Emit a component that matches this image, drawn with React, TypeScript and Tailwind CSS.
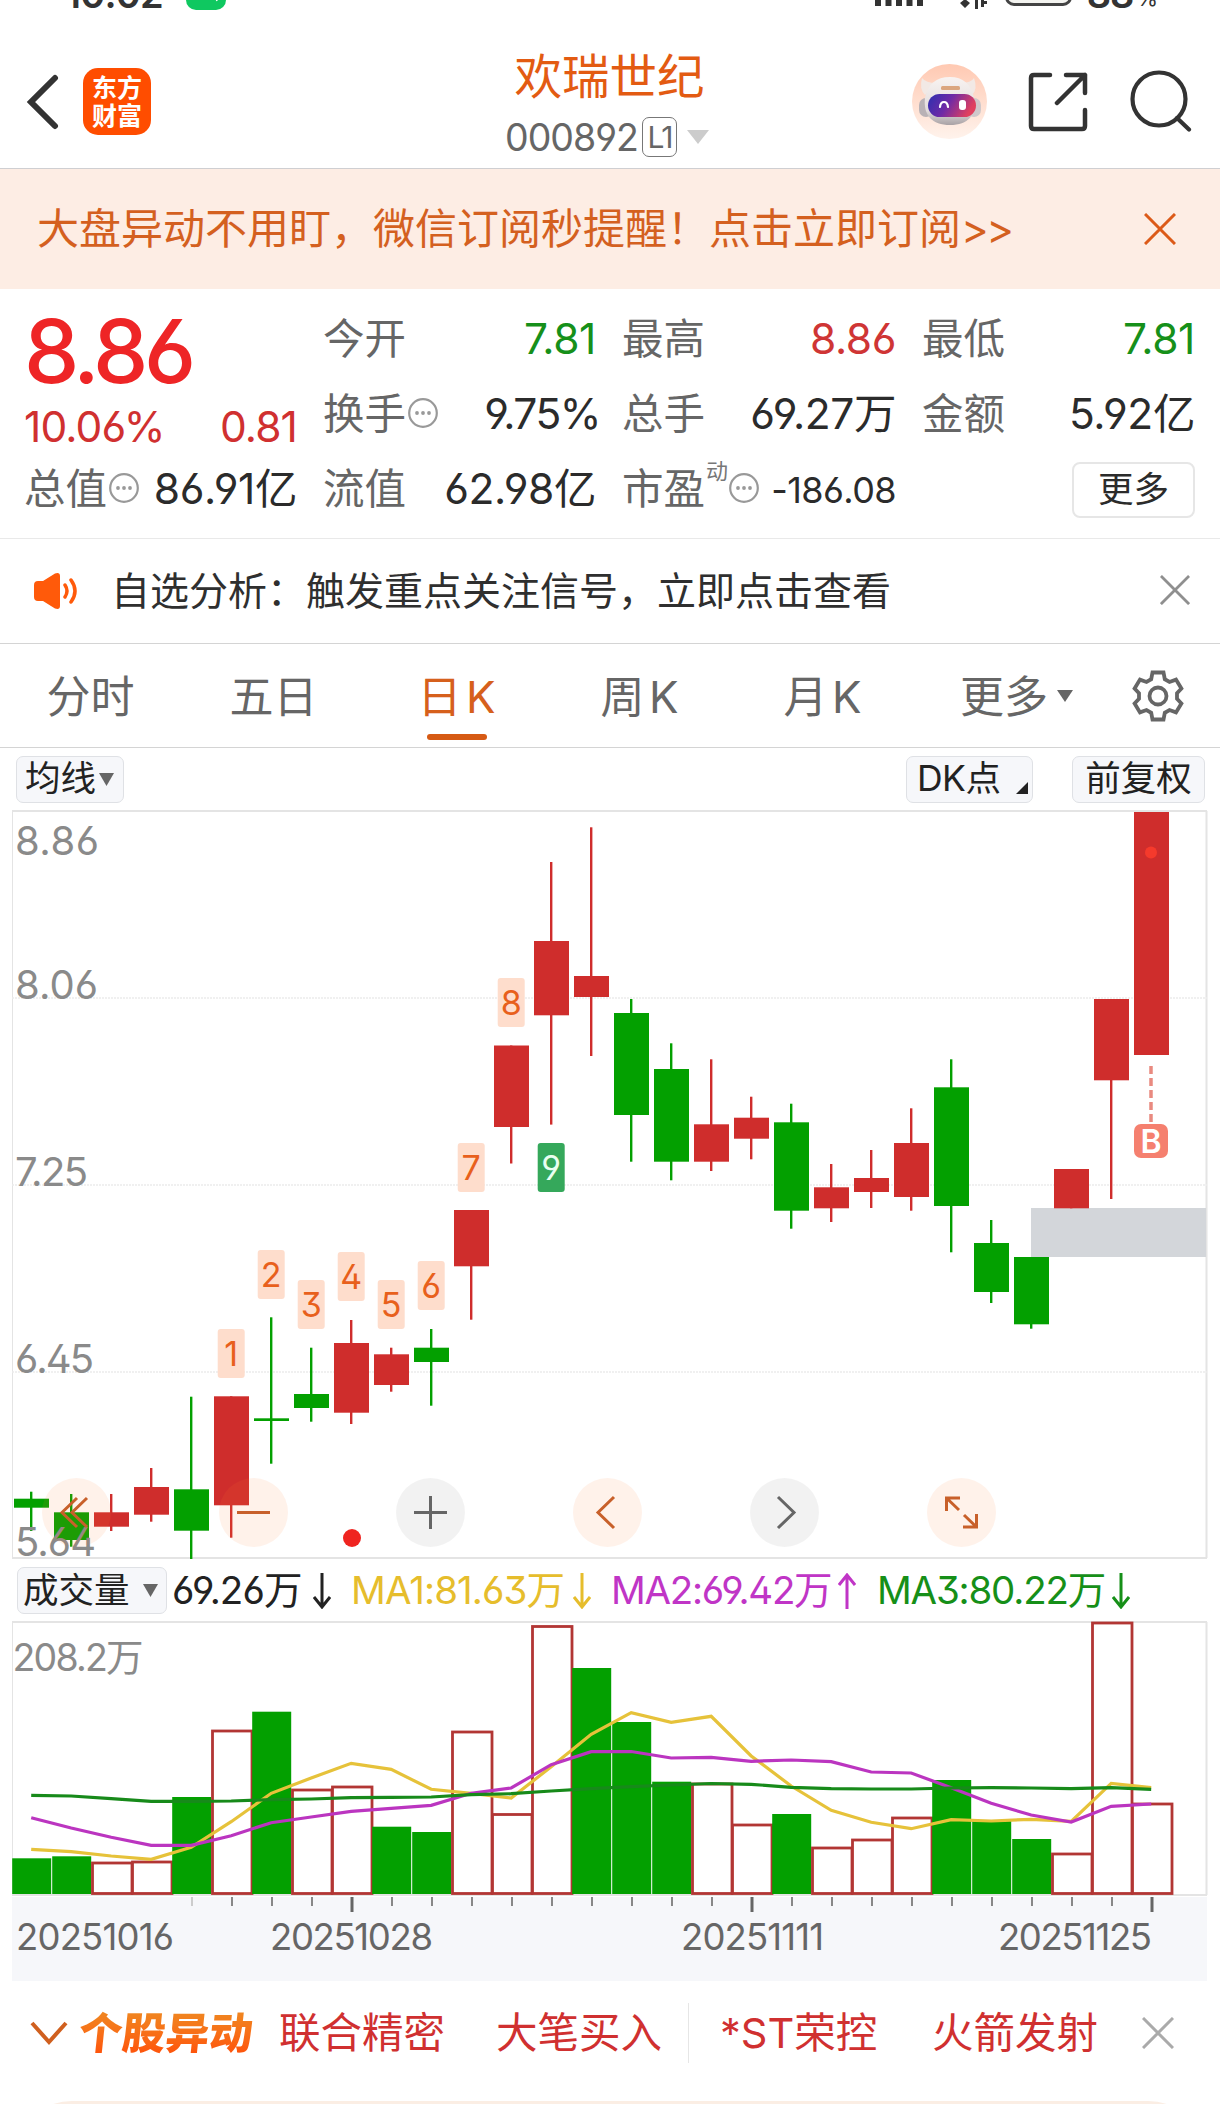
import { useId } from "react";
import type { ReactNode } from "react";

type Candle = { up: boolean; top: number; bottom: number; high: number; low: number; vol: number };

const UP = "#cf2d2c";
const DOWN = "#03a000";

const c = (up: boolean, top: number, bottom: number, high: number, low: number, vol: number): Candle => ({
  up, top, bottom, high, low, vol,
});

// candle geometry and top of the volume bar, one row per trading day
const candles: Candle[] = [
  c(false, 1498.7, 1507.7, 1491.7, 1531, 1858.3),
  c(false, 1512.3, 1540, 1494, 1546.7, 1856.3),
  c(true, 1512.3, 1526.7, 1494, 1531, 1863),
  c(true, 1487, 1514.7, 1468, 1521.7, 1862),
  c(false, 1489.3, 1530.7, 1396.7, 1559, 1797),
  c(true, 1396.3, 1505.3, 1396.3, 1537.7, 1731),
  c(false, 1418.3, 1421, 1317.3, 1463.7, 1711.7),
  c(false, 1394, 1408, 1347.7, 1421.7, 1790),
  c(true, 1343, 1412.7, 1320, 1424, 1787),
  c(true, 1354.3, 1385, 1347.7, 1391.7, 1826.7),
  c(false, 1347.7, 1362, 1329, 1405.7, 1832),
  c(true, 1210, 1266.3, 1210, 1319.7, 1732),
  c(true, 1045.5, 1127, 1045.5, 1163.5, 1814.5),
  c(true, 941, 1015.3, 862, 1124.6, 1626.5),
  c(true, 976, 997, 827.3, 1056, 1668),
  c(false, 1013, 1115, 999, 1161.7, 1722),
  c(false, 1069, 1161.7, 1043.3, 1180.3, 1781.7),
  c(true, 1124.3, 1161.7, 1059.3, 1171, 1784),
  c(true, 1117.7, 1138.7, 1096.7, 1159.3, 1825),
  c(false, 1122.3, 1210.7, 1103.7, 1228.7, 1814),
  c(true, 1187.3, 1208.3, 1164, 1222, 1848),
  c(true, 1178, 1192, 1150, 1208, 1840),
  c(true, 1143, 1197, 1108.3, 1210.7, 1818),
  c(false, 1087.3, 1206, 1059.3, 1252.3, 1780),
  c(false, 1243, 1292, 1220, 1303, 1821),
  c(false, 1257, 1324.3, 1257, 1328.7, 1839),
  c(true, 1169, 1208.3, 1169, 1208.3, 1854),
  c(true, 999, 1080.3, 999, 1199, 1623),
  c(true, 812, 1055, 812, 1055, 1804),
];

// three days have a volume bar in the other style than their candle
const hollow = (i: number) => (i === 7 ? true : i === 9 || i === 14 ? false : candles[i].up);

const ma1 = [1849.3, 1851.7, 1856, 1859.3, 1847.3, 1821.7, 1793.3, 1778, 1763.3, 1769.3, 1789.3, 1793.3, 1798, 1766.7, 1734.3, 1712.7, 1722.3, 1716.3, 1756, 1786, 1810.3, 1822.3, 1828.7, 1819.7, 1821, 1819.3, 1821.3, 1783.3, 1787.7];
const ma2 = [1817.7, 1828, 1837.3, 1845.3, 1845.3, 1835.7, 1822.7, 1817, 1811.3, 1808.3, 1805.3, 1793.3, 1788, 1764.7, 1751.7, 1751.5, 1758, 1757.3, 1761.3, 1760, 1761.7, 1772, 1773, 1787.7, 1803.3, 1815, 1822, 1806.3, 1804];
const ma3 = [1795.3, 1796, 1798.7, 1801.3, 1801.3, 1801, 1799.7, 1799, 1797.7, 1797.3, 1797, 1794.7, 1793.7, 1791, 1788.7, 1786.7, 1785, 1783.5, 1784.3, 1787.3, 1788.7, 1789, 1789, 1788, 1787.7, 1788, 1788.7, 1787.7, 1789.3];

const marks = [
  { n: 1, i: 5, y: 1329 },
  { n: 2, i: 6, y: 1250 },
  { n: 3, i: 7, y: 1280 },
  { n: 4, i: 8, y: 1252 },
  { n: 5, i: 9, y: 1280 },
  { n: 6, i: 10, y: 1261 },
  { n: 7, i: 11, y: 1143 },
  { n: 8, i: 12, y: 978 },
  { n: 9, i: 13, y: 1143 },
];

const prices = [
  { t: "8.86", y: 854.5, w: 84 },
  { t: "8.06", y: 998.5, w: 83 },
  { t: "7.25", y: 1185.5, w: 73 },
  { t: "6.45", y: 1372.5, w: 79 },
  { t: "5.64", y: 1555.5, w: 81 },
];

const cx = (i: number) => 31.2 + i * 40;
const line = (ys: number[]) => ys.map((y, i) => `${cx(i)},${y}`).join(" ");

function Cross({ size, className, width = 3 }: { size: number; className: string; width?: number }) {
  return (
    <svg width={size} height={size} viewBox="0 0 32 32" className={className} fill="none" stroke="currentColor" strokeWidth={width}>
      <path d="M1 1L31 31M31 1L1 31" />
    </svg>
  );
}

function Triangle({ w, h, className }: { w: number; h: number; className: string }) {
  return (
    <svg width={w} height={h} viewBox="0 0 10 10" preserveAspectRatio="none" className={className} fill="currentColor">
      <path d="M0 0H10L5 10Z" />
    </svg>
  );
}

function MoreDots() {
  return (
    <svg width="30" height="30" viewBox="0 0 30 30" className="mb-[3px] ml-[2px] shrink-0 text-[#999]" fill="currentColor">
      <circle cx="15" cy="15" r="13.8" fill="none" stroke="currentColor" strokeWidth="2.2" />
      <circle cx="9" cy="15" r="1.9" />
      <circle cx="15" cy="15" r="1.9" />
      <circle cx="21" cy="15" r="1.9" />
    </svg>
  );
}

function Robot() {
  const id = useId();
  return (
    <svg width="75" height="75" viewBox="0 0 75 75">
      <defs>
        <linearGradient id={`${id}bg`} x1="0" y1="0" x2="0" y2="1">
          <stop offset="0" stopColor="#ffc9b2" />
          <stop offset="1" stopColor="#fff3ec" />
        </linearGradient>
        <linearGradient id={`${id}head`} x1="0" y1="0" x2="0" y2="1">
          <stop offset="0" stopColor="#f8f3f1" />
          <stop offset="0.7" stopColor="#e2dcdc" />
          <stop offset="1" stopColor="#a9a2a5" />
        </linearGradient>
        <linearGradient id={`${id}face`} x1="0" y1="0" x2="1" y2="0.3">
          <stop offset="0" stopColor="#2b2fb0" />
          <stop offset="0.5" stopColor="#6f2aa6" />
          <stop offset="1" stopColor="#e0405f" />
        </linearGradient>
      </defs>
      <circle cx="37.5" cy="37.5" r="37.5" fill={`url(#${id}bg)`} />
      <path d="M10 14Q7 25 13 31L24 19Q14 19 10 14ZM62 14Q66 25 60 31L49 19Q59 19 62 14Z" fill="#f2e9e5" />
      <rect x="7" y="34" width="14" height="19" rx="7" fill="#b9b2b6" />
      <rect x="55" y="34" width="14" height="19" rx="7" fill="#cfc8ca" />
      <path d="M38 13C51 13 59 20 62 34C65 51 56 61 38 61C20 61 11 51 13 34C16 20 24 13 38 13Z" fill={`url(#${id}head)`} />
      <rect x="29" y="22" width="19" height="4" rx="1.5" fill="#dba67f" />
      <rect x="16" y="30" width="48" height="23" rx="11.5" fill={`url(#${id}face)`} />
      <path d="M28 43Q28.500 38 32 38Q35.500 38 36 43" fill="none" stroke="#fff" strokeWidth="2.2" strokeLinecap="round" />
      <rect x="47" y="36" width="7" height="10" rx="3" fill="#fff" />
    </svg>
  );
}

function StatusBar() {
  return (
    <div className="flex h-[12px] items-end overflow-hidden pl-[65px] pr-[62px] text-[#333]">
      <span className="mb-[-1px] w-[121px] text-[38px] leading-[38px] font-semibold tracking-[-0.8px]">10:02</span>
      <svg width="40" height="40" viewBox="0 0 40 40" className="mb-[2px] shrink-0">
        <rect width="40" height="40" rx="10" fill="#0fc860" />
        <path d="M29 26l2 5" stroke="#fff" strokeWidth="1.5" />
      </svg>
      <svg width="48" height="30" viewBox="0 0 48 30" className="mb-[6px] ml-auto shrink-0" fill="currentColor">
        <path d="M0 18h6v12H0zM10.500 14h6v16h-6zM21 10h6v20h-6zM31.500 5h6v25h-6zM42 0h6v30h-6z" />
      </svg>
      <svg width="32" height="30" viewBox="0 0 32 30" className="mb-[3px] ml-[33px] shrink-0" fill="currentColor">
        <path d="M4 24l5-4 5 4-5 5zM2 20l3 3M16 20l-3 3M19 18h3v12h-3zM25 16h3v12h-3zM28 22h3v3h-3z" />
      </svg>
      <span className="mb-[6px] ml-[17px] h-[32px] w-[67px] shrink-0 rounded-[9px] border-[3px] border-[#444] bg-[#f4f4f0]" />
      <span className="mb-[-1px] ml-[15px] text-[38px] leading-[38px] font-semibold tracking-[-1px]">88</span>
      <span className="mb-[3px] ml-[3px] text-[22px] leading-[22px]">%</span>
    </div>
  );
}

function Header() {
  return (
    <header className="flex h-[157px] items-start border-b border-[#cfcfd2] pl-[26px] pr-[28px]">
      <svg width="33" height="56" viewBox="0 0 33 56" className="mt-[62px]" fill="none" stroke="#333" strokeWidth="6" strokeLinecap="round">
        <path d="M29 4L5 28L29 52" strokeLinejoin="miter" />
      </svg>
      <div className="mt-[56px] ml-[24px] flex h-[67px] w-[68px] flex-col items-center justify-center rounded-[15px] bg-[#ff4d00] text-[25px] leading-[28px] font-bold text-white">
        <span>东方</span>
        <span>财富</span>
      </div>
      <div className="ml-[350px] flex w-[217px] flex-col items-center">
        <h1 className="mt-[41px] text-[47.5px] leading-[48px] whitespace-nowrap text-[#e35b12]">欢瑞世纪</h1>
        <div className="mt-[15px] flex w-full items-center text-[#666]">
          <span className="mt-[2px] ml-[4px] w-[137px] text-[37.5px] leading-[40px] tracking-[-1px] whitespace-nowrap">000892</span>
          <span className="flex h-[40px] w-[35px] items-center justify-center rounded-[7px] border-[1.5px] border-[#777] text-[30px] leading-none tracking-[-2px]">L1</span>
          <Triangle w={22} h={14} className="ml-[10px] shrink-0 text-[#ccc]" />
        </div>
      </div>
      <div className="mt-[52px] ml-auto">
        <Robot />
      </div>
      <svg width="60" height="60" viewBox="0 0 60 60" className="mt-[60px] ml-[41px]" fill="none" stroke="#333" strokeWidth="4.500" strokeLinecap="round">
        <path d="M22 3H6Q3 3 3 6V54Q3 57 6 57H54Q57 57 57 54V38M38 3H57V21M57 3L29 31" strokeLinejoin="round" />
      </svg>
      <svg width="62" height="62" viewBox="0 0 62 62" className="mt-[58px] ml-[42px]" fill="none" stroke="#333" strokeWidth="4.200" strokeLinecap="round">
        <circle cx="29" cy="29" r="26.500" />
        <path d="M47 48L59 59.500" />
      </svg>
    </header>
  );
}

function Stat({ label, value, more, sup, tone = "text-[#2b2b2b]", size = "text-[42.5px] tracking-[-0.4px]" }: { label: string; value: string; more?: boolean; sup?: string; tone?: string; size?: string }) {
  return (
    <div className="-ml-[2px] flex h-[75px] items-center whitespace-nowrap">
      <span className="text-[41.5px] leading-none text-[#666]">{label}</span>
      {sup && <span className="mb-[38px] -mr-[1px] ml-[1px] text-[22px] leading-none text-[#777]">{sup}</span>}
      {more && <MoreDots />}
      <span className={`ml-auto leading-none ${size} ${tone}`}>{value}</span>
    </div>
  );
}

function Quote() {
  return (
    <section className="grid h-[250px] grid-cols-[271px_271px_272px_271px] grid-rows-[75px_75px_75px] gap-x-[28px] border-b border-[#e9e9e9] pt-[13px] pl-[26px]">
      <div className="row-span-2 flex flex-col text-[#ee2526]">
        <span className="-ml-[2px] mt-[4px] text-[88px] leading-[90px] font-medium tracking-[-4.500px]">8.86</span>
        <div className="mt-[9px] -ml-[2px] flex justify-between text-[42.500px] leading-[44px] tracking-[-0.900px] text-[#d03030]">
          <span>10.06%</span>
          <span>0.81</span>
        </div>
      </div>
      <Stat label="今开" value="7.81" tone="text-[#16901a]" />
      <Stat label="最高" value="8.86" tone="text-[#cf3535]" />
      <Stat label="最低" value="7.81" tone="text-[#16901a]" />
      <Stat label="换手" value="9.75%" more size="text-[42.500px] tracking-[-1.500px] -mr-[4px]" />
      <Stat label="总手" value="69.27万" />
      <Stat label="金额" value="5.92亿" />
      <Stat label="总值" value="86.91亿" more />
      <Stat label="流值" value="62.98亿" />
      <Stat label="市盈" sup="动" value="-186.08" more size="text-[36px] tracking-[-0.600px]" />
      <button className="my-auto ml-auto h-[56px] w-[123px] rounded-[8px] border-2 border-[#e6e6e6] text-[35.500px] leading-none text-[#2b2b2b]">更多</button>
    </section>
  );
}

function Notice() {
  return (
    <div className="flex h-[105px] items-center border-b border-[#d4d4d4] pr-[30px] pl-[34px]">
      <svg width="44" height="36" viewBox="0 0 44 36" fill="none" stroke="#ff5a0a" strokeWidth="3.500" strokeLinecap="round">
        <path d="M0 12Q0 8 4 8H9L21 0.500Q26-1 26 3V33Q26 37 21 35.500L9 28H4Q0 28 0 24Z" fill="#ff5a0a" stroke="none" />
        <path d="M31 12Q35 18 31 24M37 7Q45 18 37 29" />
      </svg>
      <span className="mb-[2px] ml-[33px] text-[39px] leading-none whitespace-nowrap text-[#2f2f2f]">自选分析：触发重点关注信号，立即点击查看</span>
      <Cross size={30} className="mb-[2px] ml-auto text-[#8f8f8f]" />
    </div>
  );
}

const tabs = ["分时", "五日", "日 K", "周 K", "月 K"];

function Tabs() {
  return (
    <nav className="flex h-[104px] items-center border-b border-[#d4d4d4] text-[44px] leading-none text-[#666]">
      {tabs.map((tab, i) => (
        <div key={tab} className={`relative flex h-full w-[183px] items-center justify-center whitespace-nowrap [word-spacing:-8px] ${i === 2 ? "text-[#d6601c]" : ""}`}>
          <span className="-ml-[2px] mt-[2px]">{tab}</span>
          {i === 2 && <span className="absolute bottom-[7px] left-[61px] h-[6px] w-[60px] rounded-full bg-[#d65a14]" />}
        </div>
      ))}
      <span className="ml-[45px] mt-[2px]">更多</span>
      <Triangle w={16} h={12} className="ml-[9px] text-[#666]" />
      <svg width="54" height="54" viewBox="0 0 54 54" className="ml-[58px]" fill="none" stroke="#666" strokeWidth="3.800">
        <path d="M21.500 3.500H32.500L33.800 10.200L38.500 13L45 10.600L50.400 19.600L46 24.200V29.800L50.400 34.400L45 43.400L38.500 41L33.800 43.800L32.500 50.500H21.500L20.200 43.800L15.500 41L9 43.400L3.600 34.400L8 29.800V24.200L3.600 19.600L9 10.600L15.500 13L20.200 10.200Z" />
        <circle cx="27" cy="27" r="8.500" />
      </svg>
    </nav>
  );
}

function Chip({ className, children }: { className: string; children: ReactNode }) {
  return (
    <button className={`flex h-[47px] items-center rounded-[7px] border-[1.500px] border-[#dfe1e5] bg-[#f6f7fa] leading-none whitespace-nowrap text-[#222] ${className}`}>
      {children}
    </button>
  );
}

function PriceChart() {
  return (
    <div className="relative mx-[12px] h-[750px]">
      <svg width="1196" height="750" viewBox="12 810 1196 750" className="block">
        <g stroke="#e4e4e4" fill="none">
          <path d="M12 811H1207M12 1558H1207" strokeWidth="2" />
          <path d="M12.500 811V1558" />
          <path d="M1206.500 811V1558" strokeWidth="2" />
          <path d="M12 998H1207M12 1185H1207M12 1372H1207" strokeDasharray="2 1" strokeWidth="1.500" stroke="#ececec" />
        </g>
        <rect x="1031" y="1208" width="175" height="49" fill="#d3d6da" />
        {candles.map((d, i) => (
          <g key={i} fill={d.up ? UP : DOWN}>
            <rect x={cx(i) - 1.2} y={d.high} width="2.4" height={d.low - d.high} />
            <rect x={cx(i) - 17.2} y={d.top} width="35" height={d.bottom - d.top} />
          </g>
        ))}
        {marks.map((m) => (
          <g key={m.n}>
            <rect x={cx(m.i) - 13.5} y={m.y} width="27" height="49" rx="3" fill={m.n === 9 ? "#35a85b" : "#feddcc"} />
            <text x={cx(m.i)} y={m.y + 37} textAnchor="middle" fontSize="34" fill={m.n === 9 ? "#e9fff0" : "#e8601c"}>{m.n}</text>
          </g>
        ))}
        <circle cx="1151" cy="852.5" r="6" fill="#f53a2c" />
        <path d="M1151 1066V1123" stroke="#e98a80" strokeWidth="3.500" strokeDasharray="8 4" />
        <rect x="1134" y="1124" width="34" height="34" rx="7" fill="#f5806f" />
        <text x="1151" y="1152.5" textAnchor="middle" fontSize="32" fontWeight="600" fill="#fff">B</text>
        <circle cx="352" cy="1538" r="9" fill="#ef2420" />
        <g fontSize="40" fill="#8a8a8a">
          {prices.map((p) => (
            <text key={p.t} x="15" y={p.y} textLength={p.w}>{p.t}</text>
          ))}
        </g>
      </svg>
      <div className="absolute top-[668px] left-[30px] flex gap-[108px]">
        <NavButton warm><path d="M35 20L20 34.500L35 49M45 20L30 34.500L45 49" /></NavButton>
        <NavButton warm><path d="M18 34.500H51" /></NavButton>
        <NavButton><path d="M18 34.500H51M34.500 18V51" /></NavButton>
        <NavButton warm><path d="M41 19L25 34.500L41 50" /></NavButton>
        <NavButton><path d="M28 19L44 34.500L28 50" /></NavButton>
        <NavButton warm><path d="M33 20H19.500V33M19.500 20L32 32M36 49H49.500V36M49.500 49L37 37" /></NavButton>
      </div>
    </div>
  );
}

function NavButton({ warm, children }: { warm?: boolean; children: ReactNode }) {
  return (
    <button className={`size-[69px] rounded-full ${warm ? "bg-[#ff7a30]/10 text-[#c8602a]" : "bg-black/5 text-[#666]"}`}>
      <svg width="69" height="69" viewBox="0 0 69 69" fill="none" stroke="currentColor" strokeWidth="3">
        {children}
      </svg>
    </button>
  );
}

function Arrow({ up, className }: { up?: boolean; className: string }) {
  return (
    <svg width="18" height="36" viewBox="0 0 18 36" className={`shrink-0 ${className}`} fill="none" stroke="currentColor" strokeWidth="3">
      <path d={up ? "M9 36V2M1 12L9 2L17 12" : "M9 0V34M1 24L9 34L17 24"} />
    </svg>
  );
}

function VolumeHeader() {
  return (
    <div className="flex h-[61px] items-center pl-[17px] text-[38.500px] leading-none tracking-[-0.900px] whitespace-nowrap">
      <Chip className="w-[150px] pl-[5px] text-[35.500px] tracking-normal">
        成交量
        <Triangle w={15} h={13} className="ml-[13px] text-[#666]" />
      </Chip>
      <span className="ml-[5px] w-[134px] text-[#222]">69.26万</span>
      <Arrow className="ml-[7px] text-[#222]" />
      <span className="ml-[20px] w-[212px] text-[#e6bd2c]">MA1:81.63万</span>
      <Arrow className="ml-[10px] text-[#e6bd2c]" />
      <span className="ml-[20px] w-[218px] tracking-[-1.300px] text-[#c035c6]">MA2:69.42万</span>
      <Arrow up className="ml-[9px] text-[#c035c6]" />
      <span className="ml-[21px] w-[226px] tracking-[-1.200px] text-[#168f18]">MA3:80.22万</span>
      <Arrow className="ml-[9px] text-[#168f18]" />
    </div>
  );
}

function VolumeChart() {
  return (
    <svg width="1196" height="360" viewBox="12 1621 1196 360" className="mx-[12px] block">
      <rect x="12" y="1897" width="1195" height="84" fill="#f6f7fa" />
      <g stroke="#e4e4e4" fill="none">
        <path d="M12 1622H1207M12 1895H1207" strokeWidth="2" />
        <path d="M12.500 1622V1895" />
        <path d="M1206.500 1622V1895" strokeWidth="2" />
      </g>
      {candles.map((d, i) =>
        hollow(i) ? (
          <rect key={i} x={cx(i) - 18.700} y={d.vol} width="39.500" height={1893.500 - d.vol} fill="#fff" stroke="#b23634" strokeWidth="2.800" />
        ) : (
          <rect key={i} x={cx(i) - 19} y={d.vol} width="39" height={1894 - d.vol} fill={DOWN} />
        ),
      )}
      <g fill="none" strokeWidth="3.200">
        <polyline points={line(ma1)} stroke="#e6c23a" />
        <polyline points={line(ma2)} stroke="#bb35c0" />
        <polyline points={line(ma3)} stroke="#178a1a" />
      </g>
      {candles.map((_, i) =>
        i < 4 ? null : i % 10 === 8 ? (
          <path key={i} d={`M${cx(i) + 0.8} 1897V1912`} stroke="#666" strokeWidth="3" />
        ) : (
          <path key={i} d={`M${cx(i) + 0.8} 1897V1906`} stroke={i === 4 ? "#ccc" : "#888"} strokeWidth="2" />
        ),
      )}
      <text x="12.500" y="1671" fontSize="37.500" fill="#8a8a8a" textLength="131">208.2万</text>
      <g fontSize="36.500" fill="#666">
        <text x="16" y="1950" textLength="158">20251016</text>
        <text x="270" y="1950" textLength="163">20251028</text>
        <text x="681" y="1950" textLength="143">20251111</text>
        <text x="998" y="1950" textLength="154">20251125</text>
      </g>
    </svg>
  );
}

function Footer() {
  return (
    <footer className="flex h-[120px] items-center pb-[17px] pl-[30px] text-[41.500px] leading-none whitespace-nowrap text-[#d03030]">
      <svg width="38" height="24" viewBox="0 0 38 24" fill="none" stroke="#d0601f" strokeWidth="4">
        <path d="M2 2L19 21L36 2" />
      </svg>
      <span className="ml-[11px] w-[189px] -skew-x-6 bg-gradient-to-b from-[#ee8a22] to-[#ff4d08] bg-clip-text text-[43.500px] leading-[50px] font-black text-transparent">个股异动</span>
      <span className="mt-[2px] ml-[11px] w-[217px]">联合精密</span>
      <span className="mt-[2px] w-[192px]">大笔买入</span>
      <span className="h-[60px] w-px bg-[#e6e6e6]" />
      <span className="mt-[2px] ml-[31px] w-[212px]">*ST荣控</span>
      <span className="mt-[2px] w-[210px]">火箭发射</span>
      <Cross size={32} className="text-[#aaa]" />
    </footer>
  );
}

export default function App() {
  return (
    <main className="h-[2104px] w-[1220px] overflow-hidden bg-white font-['Inter','Noto_Sans_CJK_SC',sans-serif] [font-feature-settings:'ss01']">
      <StatusBar />
      <Header />
      <div className="flex h-[120px] items-center justify-between bg-[#fdede4] pr-[44px] pl-[37px] text-[#d4601f]">
        <span className="text-[42px] leading-none whitespace-nowrap">
          大盘异动不用盯，微信订阅秒提醒！点击立即订阅<span className="tracking-[-2.500px]">&gt;&gt;</span>
        </span>
        <Cross size={32} className="text-[#dc5a18]" />
      </div>
      <Quote />
      <Notice />
      <Tabs />
      <div className="flex h-[62px] items-center pr-[15px] pl-[16px]">
        <Chip className="w-[108px] pl-[8px] text-[35.500px]">
          均线
          <Triangle w={15} h={13} className="ml-[3px] text-[#666]" />
        </Chip>
        <Chip className="ml-auto w-[127px] pl-[10px] text-[35.500px]">
          <span className="tracking-[-0.500px]">DK点</span>
          <svg width="12" height="12" viewBox="0 0 12 12" className="mt-[18px] mr-[4px] ml-auto" fill="#222">
            <path d="M12 0V12H0Z" />
          </svg>
        </Chip>
        <Chip className="ml-[39px] w-[133px] justify-center text-[35.500px]">前复权</Chip>
      </div>
      <PriceChart />
      <VolumeHeader />
      <VolumeChart />
      <Footer />
      <div className="mx-[12px] h-[60px] rounded-t-[60px] bg-[#fbeee4]" />
    </main>
  );
}
